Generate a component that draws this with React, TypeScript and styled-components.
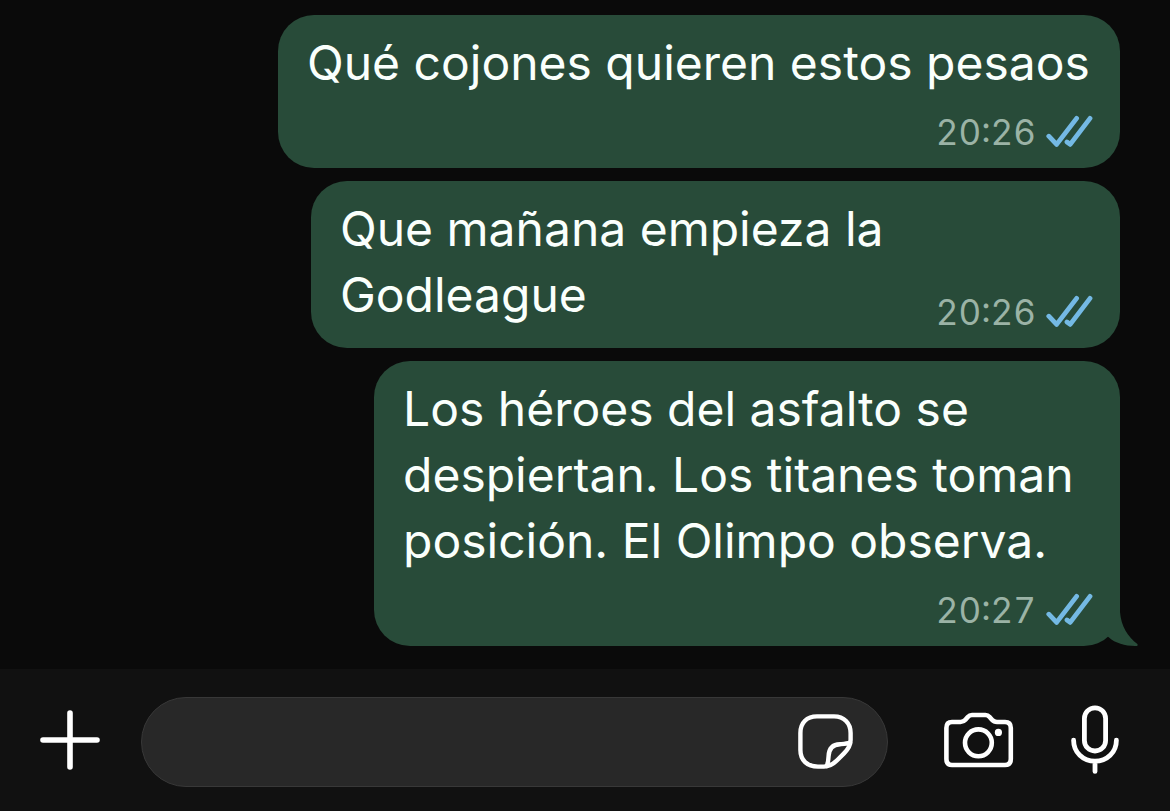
import React from "react";
import styled, { createGlobalStyle } from "styled-components";

const GlobalStyle = createGlobalStyle`
  *, *::before, *::after { box-sizing: border-box; }
  body {
    margin: 0;
    background: #0a0a0a;
    color: #fafffc;
    font-family: Inter, "Liberation Sans", sans-serif;
  }
`;

const Screen = styled.div`
  min-height: 100vh;
  display: flex;
  flex-direction: column;
`;

const Thread = styled.main`
  flex: 1;
  display: flex;
  flex-direction: column;
  justify-content: flex-end;
  align-items: flex-end;
  gap: 13px;
  padding: 15px 50px 23px;
`;

const Bubble = styled.article<{ $width: number; $inline?: boolean }>`
  position: relative;
  display: flex;
  flex-direction: ${(p) => (p.$inline ? "row" : "column")};
  align-items: flex-end;
  gap: ${(p) => (p.$inline ? 0 : 14)}px;
  width: ${(p) => p.$width}px;
  max-width: 100%;
  padding: 15px 27px 14px 29px;
  border-radius: 36px;
  background: #284b39;
`;

const Text = styled.p<{ $inline?: boolean }>`
  flex: 1;
  align-self: stretch;
  min-width: 0;
  margin: 0;
  padding-bottom: ${(p) => (p.$inline ? 6 : 0)}px;
  font-size: 48px;
  line-height: 66px;
`;

const Meta = styled.div`
  display: flex;
  align-items: center;
  gap: 10px;
  font-size: 35px;
  line-height: 44px;
  font-variant-numeric: tabular-nums;
  color: #9bb3a6;
`;

const Tail = styled.svg`
  position: absolute;
  right: -20px;
  bottom: -4px;
  fill: #284b39;
`;

const Composer = styled.form`
  display: flex;
  align-items: center;
  padding: 28px 51px 24px 40px;
  background: #111111;
`;

const Field = styled.div`
  flex: 1;
  min-width: 0;
  height: 90px;
  margin: 0 56px 0 41px;
  padding: 0 33px 0 40px;
  display: flex;
  align-items: center;
  gap: 20px;
  border: 1px solid #383838;
  border-radius: 45px;
  background: #282828;
`;

const Input = styled.input`
  flex: 1;
  min-width: 0;
  border: 0;
  outline: 0;
  background: transparent;
  color: inherit;
  font: inherit;
  font-size: 48px;
`;

const IconButton = styled.button`
  display: flex;
  flex: none;
  padding: 0;
  border: 0;
  background: none;
  color: #ffffff;
  cursor: pointer;

  svg {
    fill: none;
    stroke: currentColor;
    stroke-linecap: round;
    stroke-linejoin: round;
  }
`;

const Actions = styled.div<{ $gap?: number }>`
  display: flex;
  align-items: center;
  gap: ${(p) => p.$gap ?? 0}px;
  padding-bottom: 4px;
`;

const ReadTicks = () => (
  <svg width="47" height="34" viewBox="0 0 47 34" fill="none" stroke="#74b9e4" strokeWidth="4.8" strokeLinecap="round" strokeLinejoin="round" role="img" aria-label="Leído">
    <path d="M2.8 21.2 10.6 29.4 30.6 3.4" />
    <path d="M21 27 24.2 29.4 44 3.4" />
  </svg>
);

type Message = { text: string; time: string; width: number; inline?: boolean; tail?: boolean };

const messages: Message[] = [
  { text: "Qué cojones quieren estos pesaos", time: "20:26", width: 842 },
  { text: "Que mañana empieza la Godleague", time: "20:26", width: 809, inline: true },
  {
    text: "Los héroes del asfalto se despiertan. Los titanes toman posición. El Olimpo observa.",
    time: "20:27",
    width: 746,
    tail: true,
  },
];

export default function App() {
  return (
    <>
      <GlobalStyle />
      <Screen>
        <Thread>
          {messages.map((m) => (
            <Bubble key={m.text} $width={m.width} $inline={m.inline}>
              <Text $inline={m.inline}>{m.text}</Text>
              <Meta>
                <time>{m.time}</time>
                <ReadTicks />
              </Meta>
              {m.tail && (
                <Tail width="60" height="50" viewBox="0 0 60 50" aria-hidden="true">
                  <path d="M20 0H40V12C41 26 48 37 57.4 44Q58.6 46.4 55 46C45 46 35 43 29 37.5L20 30Z" />
                </Tail>
              )}
            </Bubble>
          ))}
        </Thread>
        <Composer onSubmit={(e) => e.preventDefault()}>
          <Actions>
            <IconButton type="button" aria-label="Adjuntar">
              <svg width="60" height="60" viewBox="0 0 60 60" strokeWidth="5.6">
                <path d="M30 3V57M3 30H57" />
              </svg>
            </IconButton>
          </Actions>
          <Field>
            <Input type="text" aria-label="Mensaje" />
            <IconButton type="button" aria-label="Stickers">
              <svg width="56" height="56" viewBox="0 0 56 56" strokeWidth="4.4">
                <path d="M26 52.6H20C9 52.6 2.4 46 2.4 36V19C2.4 8.5 9 2.4 19 2.4H36C46 2.4 52.6 9 52.6 19V26C52.6 32 50 35.4 46 39.4L39.4 46C35.4 50 32 52.6 26 52.6Z" />
                <path d="M28.6 52C30.2 49 30.4 46 30.6 42C31 34 35 30.4 42 30.2C46 30 49 30 52 28.6" />
              </svg>
            </IconButton>
          </Field>
          <Actions $gap={57}>
            <IconButton type="button" aria-label="Cámara">
              <svg width="70" height="56" viewBox="0 0 70 56" strokeWidth="4.6">
                <path d="M8 10H16.5C19 10 20 9.4 21.4 7.8L23.8 5C25 3.6 26.2 3 28 3H41.4C43.2 3 44.4 3.6 45.6 5L48 7.8C49.4 9.4 50.4 10 53 10H61C64.8 10 66.8 12 66.8 16V47C66.8 51 64.8 53 61 53H8C4.4 53 2.4 51 2.4 47V16C2.4 12 4.4 10 8 10Z" />
                <circle cx="34.4" cy="30.8" r="13.4" />
                <circle cx="54.4" cy="20.4" r="3.6" fill="currentColor" stroke="none" />
              </svg>
            </IconButton>
            <IconButton type="button" aria-label="Nota de voz">
              <svg width="48" height="70" viewBox="0 0 48 70" strokeWidth="4.8">
                <rect x="13.4" y="2.8" width="21.2" height="43.2" rx="10.6" />
                <path d="M2.6 35.2C2.6 47.4 12 56.2 24 56.2S45.4 47.4 45.4 35.2M24 56.2V66.4" />
              </svg>
            </IconButton>
          </Actions>
        </Composer>
      </Screen>
    </>
  );
}
